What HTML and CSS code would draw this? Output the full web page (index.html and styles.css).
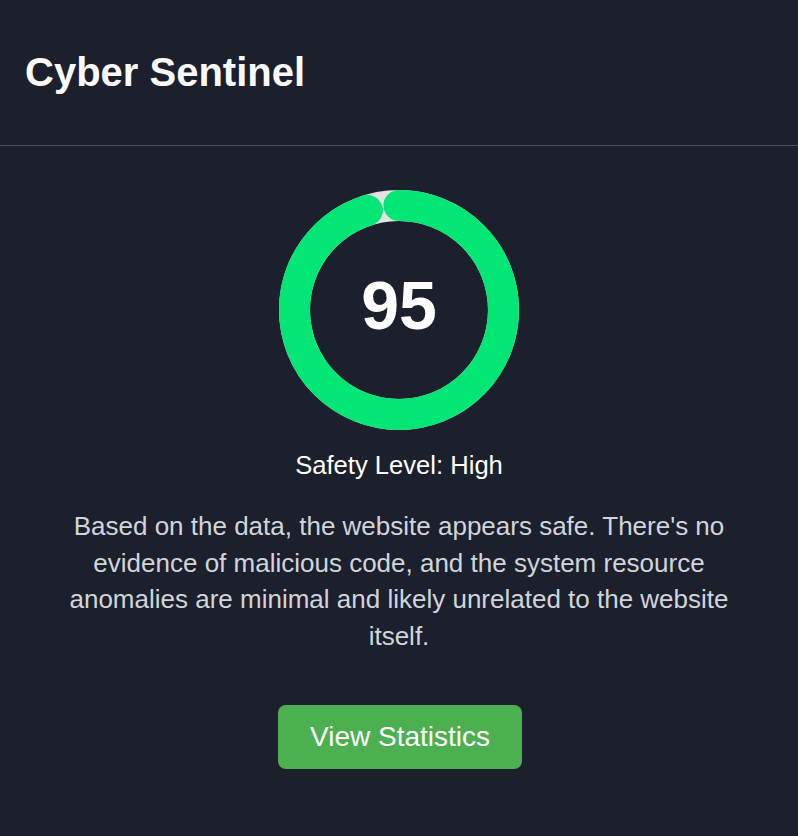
FILE: index.html
```html
<!DOCTYPE html>
<html lang="en">
<head>
<meta charset="utf-8">
<title>Cyber Sentinel</title>
<link rel="stylesheet" href="styles.css">
</head>
<body>
<header class="header">
  <h1 class="title">Cyber Sentinel</h1>
</header>
<main class="main">
  <div class="ring">
    <svg class="ring-svg" width="240" height="240" viewBox="0 0 240 240">
      <circle class="ring-track" cx="120" cy="120" r="104.5"></circle>
      <circle class="ring-progress" cx="120" cy="120" r="104.5" stroke-dasharray="623.8 656.6" transform="rotate(-90 120 120)"></circle>
    </svg>
    <span class="ring-score">95</span>
  </div>
  <div class="level">Safety Level: High</div>
  <p class="summary">Based on the data, the website appears safe. There's no evidence of malicious code, and the system resource anomalies are minimal and likely unrelated to the website itself.</p>
  <button class="btn">View Statistics</button>
</main>
</body>
</html>
```
FILE: styles.css
```css
html, body {
  margin: 0;
  padding: 0;
}
body {
  background: #1b202c;
  font-family: "Liberation Sans", Arial, Helvetica, sans-serif;
  color: #ffffff;
  width: 798px;
  height: 836px;
  overflow: hidden;
}
.header {
  display: flex;
  align-items: center;
  padding: 0 25px;
  border-bottom: 1px solid #4b5263;
  box-sizing: border-box;
  height: 146px;
}
.title {
  margin: 0;
  font-size: 40px;
  font-weight: 700;
  color: #f9fafb;
  line-height: 46px;
  position: relative;
  top: -1px;
}
.main {
  display: flex;
  flex-direction: column;
  align-items: center;
  padding: 44px 40px 0;
}
.ring {
  position: relative;
  width: 240px;
  height: 240px;
}
.ring-svg {
  display: block;
}
.ring-track {
  fill: none;
  stroke: #e2e2e2;
  stroke-width: 31;
}
.ring-progress {
  fill: none;
  stroke: #02e676;
  stroke-width: 31;
  stroke-linecap: round;
}
.ring-score {
  position: absolute;
  inset: 0;
  display: flex;
  align-items: center;
  justify-content: center;
  font-size: 68px;
  font-weight: 700;
  color: #ffffff;
  padding-bottom: 10px;
  box-sizing: border-box;
}
.level {
  margin-top: 20px;
  font-size: 25.6px;
  line-height: 30px;
  color: #ffffff;
}
.summary {
  margin: 28px 0 0;
  max-width: 718px;
  text-align: center;
  font-size: 26px;
  line-height: 36.6px;
  color: #d1d5db;
}
.btn {
  margin-top: 51px;
  margin-left: 2px;
  width: 244px;
  height: 64px;
  border: none;
  border-radius: 8px;
  background: #4caf50;
  color: #ffffff;
  font-family: inherit;
  font-size: 28px;
  cursor: pointer;
}
```
